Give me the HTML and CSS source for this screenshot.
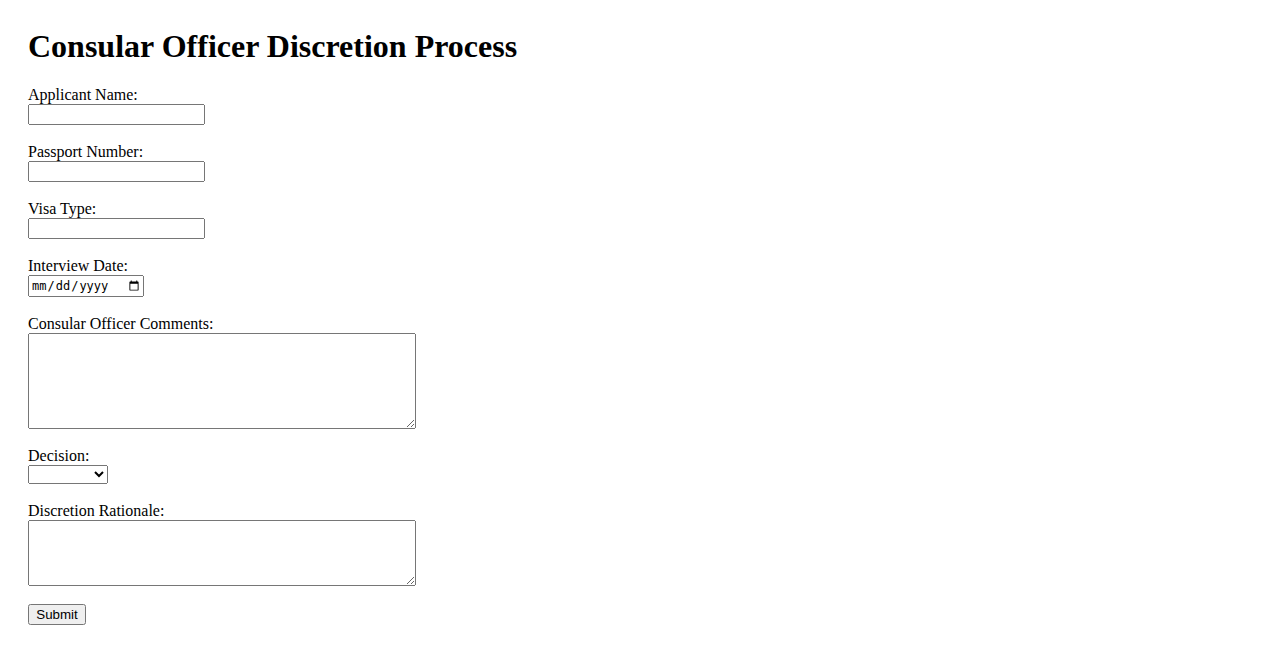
FILE: index.html
```html
<!DOCTYPE html>
<html lang="en">
<head>
<meta charset="utf-8">
<title>Consular Officer Discretion Process</title>
<link rel="stylesheet" href="styles.css">
</head>
<body class="page">
<h1 class="title">Consular Officer Discretion Process</h1>
<form class="form">
<label for="name">Applicant Name:</label><br>
<input class="text-field" type="text" id="name" name="name"><br><br>
<label for="passport">Passport Number:</label><br>
<input class="text-field" type="text" id="passport" name="passport"><br><br>
<label for="visa">Visa Type:</label><br>
<input class="text-field" type="text" id="visa" name="visa"><br><br>
<label for="date">Interview Date:</label><br>
<input class="date-field" type="date" id="date" name="date"><br><br>
<label for="comments">Consular Officer Comments:</label><br>
<textarea class="area area-tall" id="comments" name="comments" rows="5" cols="50"></textarea><br><br>
<label for="decision">Decision:</label><br>
<select class="select-field" id="decision" name="decision"></select><br><br>
<label for="rationale">Discretion Rationale:</label><br>
<textarea class="area area-short" id="rationale" name="rationale" rows="3" cols="50"></textarea><br><br>
<input class="submit-btn" type="submit" value="Submit">
</form>
</body>
</html>
```
FILE: styles.css
```css
.page {
  margin: 8px;
  padding: 20px;
  font-family: "Liberation Serif", "Times New Roman", serif;
  font-size: 16px;
  color: #000;
  background: #fff;
}
.title {
  margin-top: 0;
  font-family: "Liberation Serif", "Times New Roman", serif;
}
.text-field {
  box-sizing: border-box;
  width: 177px;
  height: 21px;
}
.date-field {
  box-sizing: border-box;
  width: 116px;
  height: 22px;
  font-size: 12px;
}
.area {
  box-sizing: border-box;
  width: 388px;
  vertical-align: top;
}
.area-tall {
  height: 96px;
}
.area-short {
  height: 66px;
}
.select-field {
  box-sizing: border-box;
  width: 80px;
  height: 19px;
}
.submit-btn {
  box-sizing: border-box;
  width: 58px;
  height: 21px;
  font-family: "Liberation Sans", Arial, sans-serif;
  font-size: 13.33px;
}
```
